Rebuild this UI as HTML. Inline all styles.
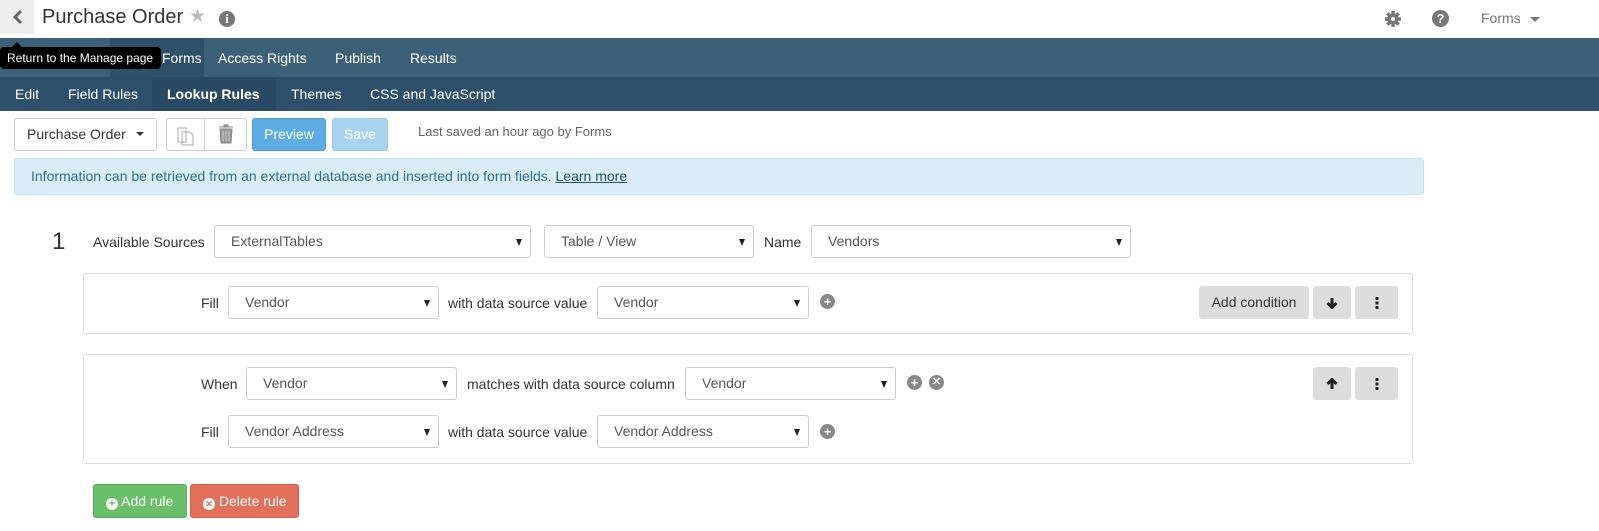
<!DOCTYPE html>
<html><head><style>
*{box-sizing:border-box;margin:0;padding:0}
body{width:1599px;height:531px;overflow:hidden;background:#fff;font-family:"Liberation Sans",sans-serif;font-size:14px;color:#333;position:relative}
.a{position:absolute}
.sel{position:absolute;border:1px solid #ccc;border-radius:3px;background:#fff;height:33px;padding-left:16px;line-height:31px;font-size:14px;color:#555}
.sel:after{content:"";position:absolute;right:8px;top:13px;border-left:3px solid transparent;border-right:3px solid transparent;border-top:7px solid #222}
.lbl{position:absolute;font-size:14px;color:#333}
.box{position:absolute;border:1px solid #ddd;border-radius:3px;left:83px;width:1330px}
.gb{position:absolute;background:#ddd;border-radius:3px;height:33px;text-align:center;line-height:33px;font-size:14px;color:#333}
.gb svg{position:absolute;left:50%;top:50%;transform:translate(-50%,-50%)}
.pc{position:absolute;width:15px;height:15px;border-radius:50%;background:#888;color:#fff;font-size:13px;font-weight:bold;line-height:15px;text-align:center}
.nav{color:#fff;font-size:14px;position:absolute}
</style></head><body>
<div class="a" style="left:0;top:0;width:34px;height:34px;background:#eee"></div>
<svg class="a" style="left:12px;top:9px" width="12" height="16"><path d="M9 2 L3 8 L9 14" stroke="#666" stroke-width="3" fill="none"/></svg>
<div class="a" style="left:42px;top:6px;font-size:20px;color:#333">Purchase Order</div>
<div class="a" style="left:189px;top:5px;font-size:19px;color:#bbb">★</div>
<div class="pc" style="left:219px;top:11px;width:16px;height:16px;background:#777;font-family:'Liberation Serif',serif;line-height:16px">i</div>
<svg class="a" style="left:1384px;top:10px" width="18" height="18" viewBox="0 0 18 18"><g stroke="#777" stroke-width="3.5"><path d="M9 1v16M1 9h16M3.3 3.3l11.4 11.4M14.7 3.3L3.3 14.7"/></g><circle cx="9" cy="9" r="5.5" fill="#777"/><circle cx="9" cy="9" r="2" fill="#fff"/></svg>
<div class="pc" style="left:1432px;top:10px;width:17px;height:17px;line-height:17px;background:#777">?</div>
<div class="a" style="left:1481px;top:10px;font-size:14px;color:#777">Forms</div>
<div class="a" style="left:1530px;top:17px;border-left:5px solid transparent;border-right:5px solid transparent;border-top:5px solid #777"></div>

<div class="a" style="left:0;top:38px;width:1599px;height:39px;background:#3d6079"></div>
<div class="a" style="left:110px;top:38px;width:94px;height:39px;background:#2f5069"></div>
<div class="nav" style="left:162px;top:50px">Forms</div>
<div class="nav" style="left:218px;top:50px">Access Rights</div>
<div class="nav" style="left:335px;top:50px">Publish</div>
<div class="nav" style="left:410px;top:50px">Results</div>
<div class="a" style="left:0;top:47px;width:161px;height:22px;background:#000;border-radius:4px;color:#fff;font-size:12px;line-height:22px;padding-left:7px">Return to the Manage page</div>
<div class="a" style="left:12px;top:42px;border-left:5px solid transparent;border-right:5px solid transparent;border-bottom:5px solid #000"></div>

<div class="a" style="left:0;top:77px;width:1599px;height:34px;background:#2d4f69"></div>
<div class="a" style="left:152px;top:77px;width:124px;height:34px;background:#2a4a63"></div>
<div class="nav" style="left:15px;top:86px">Edit</div>
<div class="nav" style="left:68px;top:86px">Field Rules</div>
<div class="nav" style="left:167px;top:86px;font-weight:bold">Lookup Rules</div>
<div class="nav" style="left:291px;top:86px">Themes</div>
<div class="nav" style="left:370px;top:86px">CSS and JavaScript</div>

<div class="a" style="left:14px;top:118px;width:143px;height:33px;border:1px solid #ccc;border-radius:3px;line-height:31px;padding-left:12px;color:#333">Purchase Order</div>
<div class="a" style="left:136px;top:132px;border-left:4px solid transparent;border-right:4px solid transparent;border-top:4px solid #333"></div>
<div class="a" style="left:166px;top:118px;width:81px;height:33px;border:1px solid #ccc;border-radius:3px"></div>
<div class="a" style="left:204px;top:118px;width:1px;height:33px;background:#ccc"></div>
<svg class="a" style="left:175px;top:124px" width="20" height="22"><path d="M3 4h8v14H3z M7 8h8l3 3v10H7z" fill="#fff" stroke="#aaa"/></svg>
<svg class="a" style="left:217px;top:123px" width="18" height="22"><path d="M2 4h14M7 4V2h4v2M3 6h12l-1 14H4z" fill="#999" stroke="#888"/><path d="M6 8v10M9 8v10M12 8v10" stroke="#ccc"/></svg>
<div class="a" style="left:252px;top:118px;width:74px;height:33px;background:#5dade2;border:1px solid #4a9fd6;border-radius:3px;color:#fff;text-align:center;line-height:31px">Preview</div>
<div class="a" style="left:332px;top:118px;width:56px;height:33px;background:#a9d4ef;border:1px solid #9ccbe9;border-radius:3px;color:#fff;text-align:center;line-height:31px">Save</div>
<div class="a" style="left:418px;top:124px;font-size:13px;color:#666">Last saved an hour ago by Forms</div>

<div class="a" style="left:14px;top:158px;width:1410px;height:37px;background:#d9edf7;border:1px solid #bce8f1;border-radius:3px;padding-left:16px;line-height:35px;color:#31708f">Information can be retrieved from an external database and inserted into form fields. <span style="text-decoration:underline;color:#245269">Learn more</span></div>

<div class="a" style="left:52px;top:228px;font-size:24px;color:#333">1</div>
<div class="lbl" style="left:93px;top:234px">Available Sources</div>
<div class="sel" style="left:214px;top:225px;width:317px">ExternalTables</div>
<div class="sel" style="left:544px;top:225px;width:210px">Table / View</div>
<div class="lbl" style="left:764px;top:234px">Name</div>
<div class="sel" style="left:811px;top:225px;width:320px">Vendors</div>

<div class="box" style="top:273px;height:61px"></div>
<div class="lbl" style="left:201px;top:295px">Fill</div>
<div class="sel" style="left:228px;top:286px;width:211px">Vendor</div>
<div class="lbl" style="left:448px;top:295px">with data source value</div>
<div class="sel" style="left:597px;top:286px;width:212px">Vendor</div>
<div class="pc" style="left:820px;top:294px">+</div>
<div class="gb" style="left:1199px;top:286px;width:110px">Add condition</div>
<div class="gb" style="left:1313px;top:286px;width:38px"><svg width="12" height="12" viewBox="0 0 12 12"><path d="M6 1v9M1.5 6l4.5 4.5L10.5 6" stroke="#222" stroke-width="3" fill="none"/></svg></div>
<div class="gb" style="left:1355px;top:286px;width:43px"><svg width="4" height="12"><rect x="0.5" y="0" width="3" height="3" fill="#222"/><rect x="0.5" y="4.5" width="3" height="3" fill="#222"/><rect x="0.5" y="9" width="3" height="3" fill="#222"/></svg></div>

<div class="box" style="top:354px;height:110px"></div>
<div class="lbl" style="left:201px;top:376px">When</div>
<div class="sel" style="left:246px;top:367px;width:211px">Vendor</div>
<div class="lbl" style="left:467px;top:376px">matches with data source column</div>
<div class="sel" style="left:685px;top:367px;width:211px">Vendor</div>
<div class="pc" style="left:907px;top:375px">+</div>
<div class="pc" style="left:929px;top:375px;font-size:11px">✕</div>
<div class="gb" style="left:1313px;top:367px;width:38px"><svg width="12" height="12" viewBox="0 0 12 12"><path d="M6 11V2M1.5 6L6 1.5L10.5 6" stroke="#222" stroke-width="3" fill="none"/></svg></div>
<div class="gb" style="left:1355px;top:367px;width:43px"><svg width="4" height="12"><rect x="0.5" y="0" width="3" height="3" fill="#222"/><rect x="0.5" y="4.5" width="3" height="3" fill="#222"/><rect x="0.5" y="9" width="3" height="3" fill="#222"/></svg></div>
<div class="lbl" style="left:201px;top:424px">Fill</div>
<div class="sel" style="left:228px;top:415px;width:211px">Vendor Address</div>
<div class="lbl" style="left:448px;top:424px">with data source value</div>
<div class="sel" style="left:597px;top:415px;width:212px">Vendor Address</div>
<div class="pc" style="left:820px;top:424px">+</div>

<div class="a" style="left:93px;top:484px;width:94px;height:34px;background:#6abf69;border:1px solid #5aa95a;border-radius:3px;color:#fff;line-height:32px;padding-left:12px"><span style="display:inline-block;width:12px;height:12px;border-radius:50%;background:#fff;color:#6abf69;font-size:11px;line-height:12px;text-align:center;font-weight:bold;vertical-align:-1px">+</span> Add rule</div>
<div class="a" style="left:190px;top:484px;width:109px;height:34px;background:#e3705b;border:1px solid #d0604c;border-radius:3px;color:#fff;line-height:32px;padding-left:12px"><span style="display:inline-block;width:12px;height:12px;border-radius:50%;background:#fff;color:#e3705b;font-size:9px;line-height:12px;text-align:center;font-weight:bold;vertical-align:-1px">✕</span> Delete rule</div>
</body></html>
